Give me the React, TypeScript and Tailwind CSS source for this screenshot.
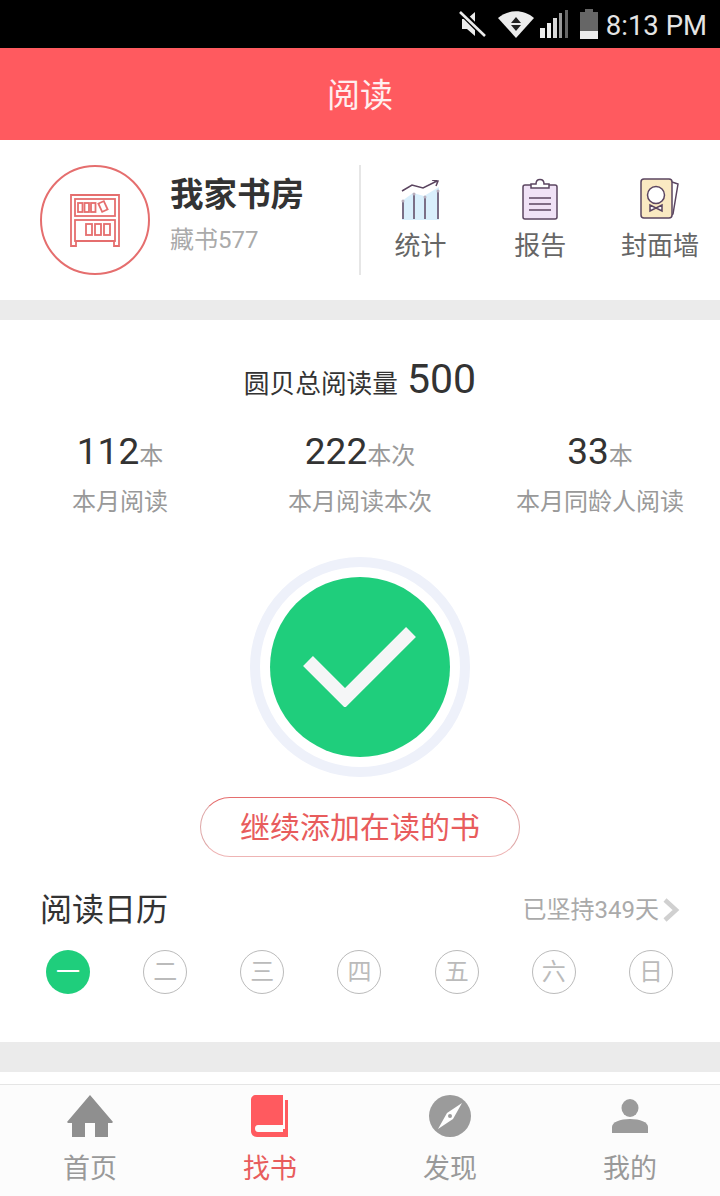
import React from "react";

const StatusBar = () => (
  <div className="h-12 bg-black flex items-center justify-end pr-[13px] text-[#e4e4e4]">
    <svg width="28" height="28" viewBox="0 0 28 28" className="mr-[11px]">
      <path d="M3 9h5l8-7v24l-8-7H3z" fill="#ececec" />
      <path d="M1 1l25 25" stroke="#000" strokeWidth="6" />
      <path d="M1 2l25 24" stroke="#ececec" strokeWidth="2.6" />
    </svg>
    <svg width="36" height="28" viewBox="0 0 36 28" className="mr-[6px]">
      <path d="M0 8C10-1 26-1 36 8L18 28z" fill="#ececec" />
      <path d="M18 7l5 6H13zM18 21l-5-6h10z" fill="#222" />
    </svg>
    <svg width="28" height="30" viewBox="0 0 28 30" className="mr-[12px]">
      <path d="M0 19h5v10H0z" fill="#ececec" />
      <path d="M7 14h4v15H7z" fill="#ececec" />
      <path d="M13 9h4v20h-4z" fill="#d8d8d8" />
      <path d="M19 4h3v25h-3z" fill="#999" />
      <path d="M25 1h3v28h-3z" fill="#666" />
    </svg>
    <svg width="18" height="30" viewBox="0 0 18 30" className="mr-[8px]">
      <path d="M5 0h8v3h5v27H0V3h5z" fill="#666" />
      <path d="M0 22h18v8H0z" fill="#ececec" />
    </svg>
    <span className="pt-[3px] text-[27.500px] leading-none font-['Roboto',sans-serif]">8:13 PM</span>
  </div>
);

const ShelfLogo = () => (
  <div className="w-[110px] h-[110px] rounded-full border-2 border-[#e56e6e] flex items-center justify-center shrink-0">
    <svg width="50" height="53" viewBox="0 0 50 53" fill="none" stroke="#e56e6e" strokeWidth="1.800">
      <path d="M1 1h48v51h-5v-5H6v5H1z" />
      <rect x="5" y="5" width="40" height="17" />
      <rect x="5" y="26" width="40" height="21" />
      <rect x="8" y="9" width="4.500" height="9" />
      <rect x="14.500" y="9" width="4.500" height="9" />
      <rect x="21" y="9" width="4.500" height="9" />
      <rect x="30" y="8" width="6" height="9" transform="rotate(-25 33 12.500)" />
      <rect x="16" y="30" width="6" height="11" />
      <rect x="25" y="30" width="6" height="11" />
      <rect x="34" y="30" width="6" height="11" />
    </svg>
  </div>
);

const ChartIcon = () => (
  <svg width="40" height="40" viewBox="0 0 40 40" fill="none">
    <path d="M1 21l11-8 11 3 15-9v33H1z" fill="#d9effc" />
    <g stroke="#5b4560" strokeWidth="1.500">
      <path d="M2 21v18M13 14v25M24 17v22M37 11v28" />
      <path d="M1 11l10-6 11 3 14-7M31 0l6 1-2 5" />
    </g>
    <circle cx="2" cy="21" r="1.500" fill="#b9aebc" />
    <circle cx="13" cy="14" r="1.500" fill="#b9aebc" />
    <circle cx="24" cy="17" r="1.500" fill="#b9aebc" />
    <circle cx="37" cy="11" r="1.500" fill="#b9aebc" />
  </svg>
);

const ReportIcon = () => (
  <svg width="36" height="42" viewBox="0 0 36 42" fill="none" stroke="#5b4560" strokeWidth="1.500">
    <rect x="1" y="7" width="34" height="34" rx="2" fill="#f0e2f6" />
    <path d="M9 10V6h5c0-6 8-6 8 0h5v4z" fill="#fff" />
    <path d="M7 20h22M7 26h22M7 32h22" />
  </svg>
);

const CoverIcon = () => (
  <svg width="40" height="42" viewBox="0 0 40 42" fill="none" stroke="#5b4560" strokeWidth="1.500">
    <path d="M32 4l6 2-5 30-1 1" />
    <rect x="1" y="1" width="31" height="39" rx="3" fill="#fae9c2" />
    <circle cx="16" cy="17" r="8.500" fill="#fff" />
    <path d="M16 30l-6-3v6zM16 30l6-3v6z" fill="#fff" />
  </svg>
);

const Entry = ({ icon, label }: { icon: React.ReactNode; label: string }) => (
  <div className="w-[120px] flex flex-col items-center">
    <div className="h-[44px] flex items-end justify-center">{icon}</div>
    <span className="mt-[8px] text-[26px] leading-[36px] text-[#666]">{label}</span>
  </div>
);

const Stat = ({ value, unit, label }: { value: string; unit: string; label: string }) => (
  <div className="flex-1 flex flex-col items-center">
    <div className="h-[44px] flex items-baseline text-[#333]">
      <span className="text-[37px] leading-[44px]">{value}</span>
      <span className="text-[24px] text-[#999]">{unit}</span>
    </div>
    <span className="mt-[11px] text-[24px] leading-[34px] text-[#999]">{label}</span>
  </div>
);

const days = ["一", "二", "三", "四", "五", "六", "日"];

const tabs = [
  {
    label: "首页",
    color: "text-[#999]",
    icon: (
      <svg width="46" height="42" viewBox="0 0 46 42">
        <path d="M23 0l23 27-1 1h-4v14H28V28H18v14H5V28H1l-1-1z" fill="#8f8f8f" />
      </svg>
    ),
  },
  {
    label: "找书",
    color: "text-[#e85c5c]",
    icon: (
      <svg width="38" height="42" viewBox="0 0 38 42">
        <path d="M5 0h27v30H7c-2 0-3 1.500-3 3.500S5 37 7 37h25v-3h2V5h3v37H6c-3 0-6-2-6-6V5c0-3 2-5 5-5z" fill="#ff5a5f" />
      </svg>
    ),
  },
  {
    label: "发现",
    color: "text-[#999]",
    icon: (
      <svg width="42" height="42" viewBox="0 0 42 42">
        <circle cx="21" cy="21" r="21" fill="#9b9b9b" />
        <path d="M33 8l-9 16-15 10 9-16z" fill="#fff" />
        <circle cx="21" cy="21" r="2" fill="#9b9b9b" />
      </svg>
    ),
  },
  {
    label: "我的",
    color: "text-[#999]",
    icon: (
      <svg width="36" height="34" viewBox="0 0 36 34" className="mb-[4px]">
        <ellipse cx="18" cy="9" rx="8.500" ry="9" fill="#9b9b9b" />
        <path d="M0 34v-6c0-5 8-8 18-8s18 3 18 8v6z" fill="#9b9b9b" />
      </svg>
    ),
  },
];

export default function App() {
  return (
    <div className="w-[720px] h-[1196px] overflow-hidden bg-white font-['Roboto','Noto_Sans_CJK_SC',sans-serif]">
      <StatusBar />
      <div className="h-[92px] pt-[3px] bg-[#ff5a5f] flex items-center justify-center text-white/90 text-[33px]">阅读</div>

      <div className="h-[160px] flex items-center pl-[40px]">
        <ShelfLogo />
        <div className="ml-[20px] mb-[10px] w-[189px]">
          <div className="text-[33.500px] leading-[44px] font-bold text-[#333]">我家书房</div>
          <div className="mt-[5px] text-[24px] leading-[36px] text-[#aaa]">藏书577</div>
        </div>
        <div className="w-[2px] h-[110px] bg-[#e6e6e6]" />
        <Entry icon={<ChartIcon />} label="统计" />
        <Entry icon={<ReportIcon />} label="报告" />
        <Entry icon={<CoverIcon />} label="封面墙" />
      </div>

      <div className="h-[20px] bg-[#ebebeb]" />

      <div className="h-[722px] flex flex-col">
        <div className="mt-[34px] h-[50px] flex items-baseline justify-center text-[#333]">
          <span className="text-[25.700px]">圆贝总阅读量</span>
          <span className="ml-[9px] text-[41px] leading-[50px]">500</span>
        </div>
        <div className="mt-[26px] flex">
          <Stat value="112" unit="本" label="本月阅读" />
          <Stat value="222" unit="本次" label="本月阅读本次" />
          <Stat value="33" unit="本" label="本月同龄人阅读" />
        </div>

        <div className="mt-[38px] mx-auto w-[220px] h-[220px] rounded-full border-[10px] border-[#eef1fa] p-[10px]">
          <div className="w-full h-full rounded-full bg-[#1fce7c] flex items-center justify-center">
            <svg width="114" height="80" viewBox="0 0 114 80" fill="none">
              <path d="M5 34l37 37L108 5" stroke="#f5f6f7" strokeWidth="14" />
            </svg>
          </div>
        </div>

        <div className="mt-[20px] mx-auto w-[320px] h-[60px] rounded-[30px] border border-t-[#e56e6e] border-x-[#dfa8a8] border-b-[#eeb4b4] flex items-center justify-center text-[30px] text-[#e85c5c]">
          继续添加在读的书
        </div>

        <div className="mt-[30px] px-[40px] flex items-center justify-between">
          <span className="text-[32px] leading-[46px] text-[#333]">阅读日历</span>
          <span className="flex items-center text-[24px] text-[#aaa]">
            已坚持349天
            <svg width="18" height="24" viewBox="0 0 18 24" fill="none" className="ml-[3px]">
              <path d="M3 2l11 10L3 22" stroke="#d0d0d0" strokeWidth="4.500" />
            </svg>
          </span>
        </div>

        <div className="mt-[17px] pl-[46px] pr-[47px] flex justify-between">
          {days.map((d, i) => (
            <div
              key={d}
              className={`w-[44px] h-[44px] rounded-full flex items-center justify-center text-[24px] ${
                i === 0 ? "bg-[#1fce7c] text-white" : "border border-[#bbb] text-[#bbb]"
              }`}
            >
              {d}
            </div>
          ))}
        </div>
      </div>

      <div className="h-[30px] bg-[#ebebeb]" />
      <div className="h-[12px] bg-white" />

      <div className="h-[112px] border-t border-[#e5e5e5] bg-[#fcfcfc] flex">
        {tabs.map((t) => (
          <div key={t.label} className="flex-1 flex flex-col items-center">
            <div className="h-[46px] mt-[6px] flex items-end justify-center">{t.icon}</div>
            <span className={`mt-[12px] text-[27px] leading-[40px] ${t.color}`}>{t.label}</span>
          </div>
        ))}
      </div>
    </div>
  );
}
